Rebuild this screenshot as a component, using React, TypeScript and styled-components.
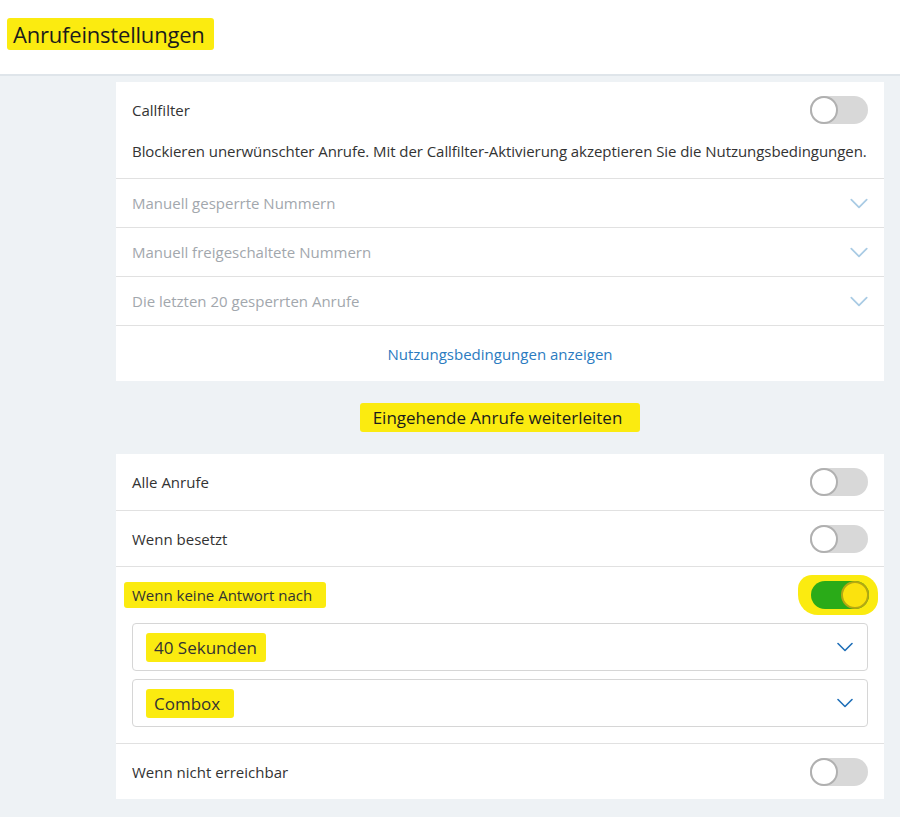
import React from "react";
import styled, { createGlobalStyle } from "styled-components";

const Global = createGlobalStyle`
  html, body { margin: 0; padding: 0; }
  body {
    background: #eef2f5;
    font-family: "Open Sans", "Noto Sans", sans-serif;
    color: #333;
    -webkit-font-smoothing: antialiased;
  }
`;

const Page = styled.div`
  width: 900px;
  height: 817px;
  overflow: hidden;
  background: #eef2f5;
`;

const Header = styled.header`
  height: 76px;
  background: #fff;
  border-bottom: 2px solid #dfe5ea;
  box-sizing: border-box;
  padding: 20px 0 0 7px;
`;

const Mark = styled.span<{ $pad?: string }>`
  background: #fbeb10;
  padding: ${(p) => p.$pad || "2px 6px"};
  border-radius: 3px;
  box-decoration-break: clone;
`;

const Title = styled.h1`
  margin: 0;
  font-size: 22px;
  font-weight: 400;
  color: #1c1c1c;
  line-height: 28px;
  letter-spacing: -0.2px;
`;

const Content = styled.main`
  width: 768px;
  margin: 6px 0 0 116px;
`;

const Card = styled.section`
  background: #fff;
`;

const Row = styled.div<{ $h?: number; $border?: boolean }>`
  display: flex;
  align-items: center;
  justify-content: space-between;
  height: ${(p) => p.$h || 56}px;
  padding: 0 16px;
  border-top: ${(p) => (p.$border ? "1px solid #e1e1e1" : "none")};
  box-sizing: border-box;
`;

const Label = styled.span`
  font-size: 15px;
  color: #333;
`;

const Desc = styled.p`
  margin: 0;
  padding: 3px 16px 17px;
  font-size: 15px;
  line-height: 20px;
  color: #333;
  letter-spacing: -0.06px;
  white-space: nowrap;
`;

const AccLabel = styled.span`
  font-size: 15px;
  color: #a2a7ad;
`;

const LinkRow = styled.div`
  height: 56px;
  border-top: 1px solid #e1e1e1;
  display: flex;
  align-items: center;
  justify-content: center;
  box-sizing: border-box;
`;

const Link = styled.a`
  font-size: 15px;
  color: #2b7bbf;
  text-decoration: none;
`;

const SectionTitle = styled.h2`
  margin: 0;
  height: 73px;
  display: flex;
  align-items: center;
  justify-content: center;
  font-size: 17px;
  font-weight: 400;
  color: #1c1c1c;
`;

const Track = styled.span<{ $on?: boolean }>`
  position: relative;
  display: inline-block;
  width: 58px;
  height: 28px;
  border-radius: 14px;
  background: ${(p) => (p.$on ? "#2aab18" : "#d8d8d8")};
  flex-shrink: 0;
`;

const Knob = styled.span<{ $on?: boolean }>`
  position: absolute;
  top: 0;
  left: ${(p) => (p.$on ? "30px" : "0")};
  width: 28px;
  height: 28px;
  border-radius: 50%;
  box-sizing: border-box;
  background: ${(p) => (p.$on ? "#fbe20e" : "#fff")};
  border: 2px solid ${(p) => (p.$on ? "#b5a812" : "#b0b0b0")};
`;

const ToggleMark = styled.span`
  display: inline-flex;
  padding: 6px 9px 6px 13px;
  margin-right: -10px;
  background: #fbeb10;
  border-radius: 14px 18px 16px 20px;
`;

const Selects = styled.div`
  padding: 0 16px 16px;
  display: flex;
  flex-direction: column;
  gap: 8px;
`;

const Select = styled.div`
  height: 48px;
  border: 1px solid #d6d6d6;
  border-radius: 4px;
  display: flex;
  align-items: center;
  justify-content: space-between;
  padding: 0 14px 0 13px;
  box-sizing: border-box;
`;

const SelectText = styled.span`
  font-size: 17px;
  color: #333;
`;

const Toggle = ({ on }: { on?: boolean }) => (
  <Track $on={on}>
    <Knob $on={on} />
  </Track>
);

const Chevron = ({ color, w = 16 }: { color: string; w?: number }) => (
  <svg width={w} height={w / 2 + 2} viewBox="0 0 16 10" fill="none">
    <path d="M1 1.5 L8 8.5 L15 1.5" stroke={color} strokeWidth="1.6" strokeLinecap="round" strokeLinejoin="round" />
  </svg>
);

const AccRow = ({ label }: { label: string }) => (
  <Row $h={49} $border>
    <AccLabel>{label}</AccLabel>
    <Chevron color="#a9cbe4" w={18} />
  </Row>
);

export default function App() {
  return (
    <Page>
      <Global />
      <Header>
        <Title>
          <Mark $pad="1px 9px 1px 6px">Anrufeinstellungen</Mark>
        </Title>
      </Header>
      <Content>
        <Card>
          <Row $h={56}>
            <Label>Callfilter</Label>
            <Toggle />
          </Row>
          <Desc>
            Blockieren unerwünschter Anrufe. Mit der Callfilter-Aktivierung akzeptieren Sie die Nutzungsbedingungen.
          </Desc>
          <AccRow label="Manuell gesperrte Nummern" />
          <AccRow label="Manuell freigeschaltete Nummern" />
          <AccRow label="Die letzten 20 gesperrten Anrufe" />
          <LinkRow>
            <Link href="#">Nutzungsbedingungen anzeigen</Link>
          </LinkRow>
        </Card>
        <SectionTitle>
          <Mark $pad="3px 18px 3px 13px">Eingehende Anrufe weiterleiten</Mark>
        </SectionTitle>
        <Card>
          <Row>
            <Label>Alle Anrufe</Label>
            <Toggle />
          </Row>
          <Row $border>
            <Label>Wenn besetzt</Label>
            <Toggle />
          </Row>
          <Row $border $h={57}>
            <Label>
              <Mark $pad="3px 14px 3px 8px" style={{ marginLeft: -8 }}>
                Wenn keine Antwort nach
              </Mark>
            </Label>
            <ToggleMark>
              <Toggle on />
            </ToggleMark>
          </Row>
          <Selects>
            <Select>
              <SelectText>
                <Mark $pad="3px 9px 3px 8px">40 Sekunden</Mark>
              </SelectText>
              <Chevron color="#1f6fb8" />
            </Select>
            <Select>
              <SelectText>
                <Mark $pad="3px 14px 3px 8px">Combox</Mark>
              </SelectText>
              <Chevron color="#1f6fb8" />
            </Select>
          </Selects>
          <Row $border>
            <Label>Wenn nicht erreichbar</Label>
            <Toggle />
          </Row>
        </Card>
      </Content>
    </Page>
  );
}
